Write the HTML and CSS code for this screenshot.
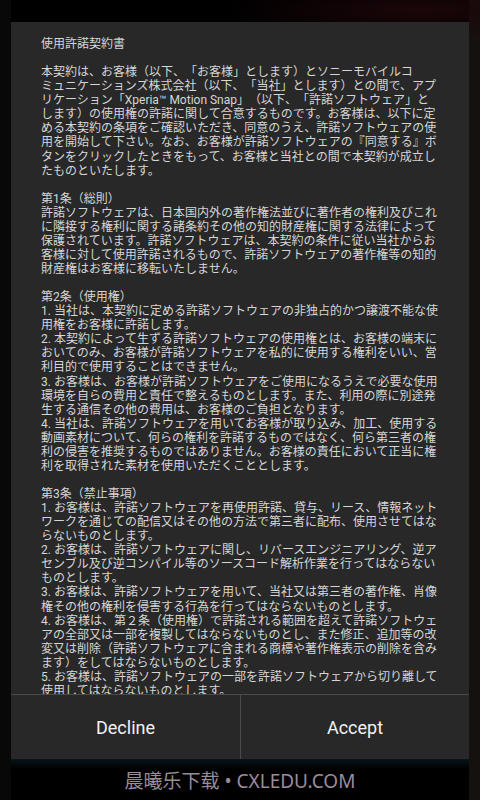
FILE: index.html
```html
<!DOCTYPE html>
<html lang="ja">
<head>
<meta charset="utf-8">
<title>使用許諾契約書</title>
<link rel="stylesheet" href="styles.css">
</head>
<body>
<div class="screen">
  <div class="dialog">
    <div class="content">
      <p class="title">使用許諾契約書</p>
      <p>本契約は、お客様（以下、「お客様」とします）とソニーモバイルコ<br>ミュニケーションズ株式会社（以下、「当社」とします）との間で、アプ<br>リケーション「Xperia™ Motion Snap」（以下、「許諾ソフトウェア」と<br>します）の使用権の許諾に関して合意するものです。お客様は、以下に定<br>める本契約の条項をご確認いただき、同意のうえ、許諾ソフトウェアの使<br>用を開始して下さい。なお、お客様が許諾ソフトウェアの『同意する』ボ<br>タンをクリックしたときをもって、お客様と当社との間で本契約が成立し<br>たものといたします。</p>
      <p>第1条（総則）<br>許諾ソフトウェアは、日本国内外の著作権法並びに著作者の権利及びこれ<br>に隣接する権利に関する諸条約その他の知的財産権に関する法律によって<br>保護されています。許諾ソフトウェアは、本契約の条件に従い当社からお<br>客様に対して使用許諾されるもので、許諾ソフトウェアの著作権等の知的<br>財産権はお客様に移転いたしません。</p>
      <p>第2条（使用権）<br>1. 当社は、本契約に定める許諾ソフトウェアの非独占的かつ譲渡不能な使<br>用権をお客様に許諾します。<br>2. 本契約によって生ずる許諾ソフトウェアの使用権とは、お客様の端末に<br>おいてのみ、お客様が許諾ソフトウェアを私的に使用する権利をいい、営<br>利目的で使用することはできません。<br>3. お客様は、お客様が許諾ソフトウェアをご使用になるうえで必要な使用<br>環境を自らの費用と責任で整えるものとします。また、利用の際に別途発<br>生する通信その他の費用は、お客様のご負担となります。<br>4. 当社は、許諾ソフトウェアを用いてお客様が取り込み、加工、使用する<br>動画素材について、何らの権利を許諾するものではなく、何ら第三者の権<br>利の侵害を推奨するものではありません。お客様の責任において正当に権<br>利を取得された素材を使用いただくこととします。</p>
      <p>第3条（禁止事項）<br>1. お客様は、許諾ソフトウェアを再使用許諾、貸与、リース、情報ネット<br>ワークを通じての配信又はその他の方法で第三者に配布、使用させてはな<br>らないものとします。<br>2. お客様は、許諾ソフトウェアに関し、リバースエンジニアリング、逆ア<br>センブル及び逆コンパイル等のソースコード解析作業を行ってはならない<br>ものとします。<br>3. お客様は、許諾ソフトウェアを用いて、当社又は第三者の著作権、肖像<br>権その他の権利を侵害する行為を行ってはならないものとします。<br>4. お客様は、第２条（使用権）で許諾される範囲を超えて許諾ソフトウェ<br>アの全部又は一部を複製してはならないものとし、また修正、追加等の改<br>変又は削除（許諾ソフトウェアに含まれる商標や著作権表示の削除を含み<br>ます）をしてはならないものとします。<br>5. お客様は、許諾ソフトウェアの一部を許諾ソフトウェアから切り離して<br>使用してはならないものとします。</p>
    </div>
    <div class="buttons">
      <div class="btn">Decline</div>
      <div class="btn btn-right">Accept</div>
    </div>
  </div>
  <div class="watermark">晨曦乐下载 • CXLEDU.COM</div>
</div>
</body>
</html>
```

FILE: styles.css
```css
html, body {
  margin: 0;
  padding: 0;
  background: #000;
}

body {
  width: 480px;
  height: 800px;
  overflow: hidden;
}

.screen {
  width: 480px;
  height: 800px;
  box-sizing: border-box;
  padding: 22px 11px 0;
  background:
    radial-gradient(ellipse 200px 30px at 420px 10px, #1c0609 0%, transparent 100%),
    linear-gradient(to right, #080808 0, #080808 11px, transparent 11px, transparent 469px, #15110f 469px),
    #000;
}

.dialog {
  height: 737px;
  background: #282828;
  display: flex;
  flex-direction: column;
}

.content {
  flex: 1;
  min-height: 0;
  overflow: hidden;
  padding: 15px 20px 0 30px;
  font-family: Roboto, "Noto Sans CJK JP", sans-serif;
  font-size: 12px;
  line-height: 14.07px;
  color: #d6d6d6;
  white-space: nowrap;
  text-spacing-trim: space-all;
}

.content p {
  margin: 0 0 14.07px;
}

.buttons {
  height: 64px;
  border-top: 1px solid #4a4a4a;
  display: grid;
  grid-template-columns: 229px 1fr;
}

.btn {
  display: flex;
  align-items: center;
  justify-content: center;
  font-family: Roboto, sans-serif;
  font-size: 18px;
  color: #f2f2f2;
}

.btn-right {
  border-left: 1px solid #4a4a4a;
}

.watermark {
  height: 41px;
  display: flex;
  align-items: center;
  justify-content: center;
  font-family: "Noto Sans", "Noto Sans CJK SC", sans-serif;
  font-size: 19px;
  color: #9a8c9a;
  background: linear-gradient(to bottom, #08151b 0px, #03080a 6px, #000 10px);
}
```
